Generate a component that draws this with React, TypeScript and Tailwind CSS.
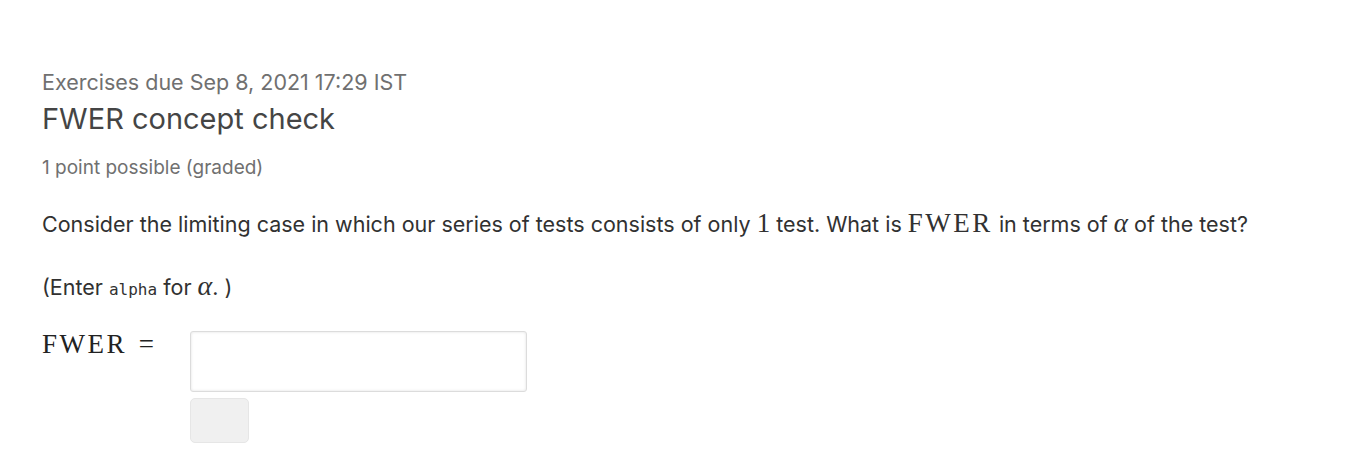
export default function App() {
  const math = { fontFamily: '"Liberation Serif", "DejaVu Serif", serif' };
  return (
    <div className="min-h-[466px] w-[1350px] bg-white px-[42px] pt-[68px] text-[#313131]" style={{ fontFamily: 'Inter, "Noto Sans", sans-serif' }}>
      <div className="text-[21.5px] leading-[28px] text-[#707070]">Exercises due Sep 8, 2021 17:29 IST</div>
      <h2 className="mt-[5px] text-[29px] leading-[36px] text-[#454545]">FWER concept check</h2>
      <div className="mt-[18px] text-[19px] leading-[26px] text-[#707070]">1 point possible (graded)</div>

      <p className="mt-[28px] text-[21.5px] leading-[30px]">
        Consider the limiting case in which our series of tests consists of only{" "}
        <span className="text-[27px] leading-none" style={math}>1</span> test. What is{" "}
        <span className="text-[27px] leading-none tracking-[2.5px]" style={math}>FWER</span> in terms of{" "}
        <span className="text-[27px] leading-none italic" style={math}>α</span> of the test?
      </p>

      <p className="mt-[33px] text-[21.5px] leading-[30px]">
        (Enter{" "}
        <code className="text-[16px] leading-none" style={{ fontFamily: '"DejaVu Sans Mono", "Liberation Mono", monospace' }}>alpha</code>{" "}
        for <span className="text-[28px] leading-none italic" style={math}>α</span>. )
      </p>

      <div className="mt-[29px] flex items-start">
        <div className="w-[148px] text-[27px] leading-[26px] text-[#222]" style={math}>
          <span className="tracking-[2.5px]">FWER</span> <span className="ml-[5px]">=</span>
        </div>
        <div className="flex flex-col gap-[6px]">
          <input
            type="text"
            className="h-[61px] w-[337px] rounded-[3px] border border-[#dcdcdc] bg-white shadow-[inset_0_0_3px_rgba(0,0,0,0.12)] outline-none"
          />
          <button className="h-[45px] w-[59px] rounded-[5px] border border-[#e6e6e6] bg-[#f0f0f0]" />
        </div>
      </div>
    </div>
  );
}
